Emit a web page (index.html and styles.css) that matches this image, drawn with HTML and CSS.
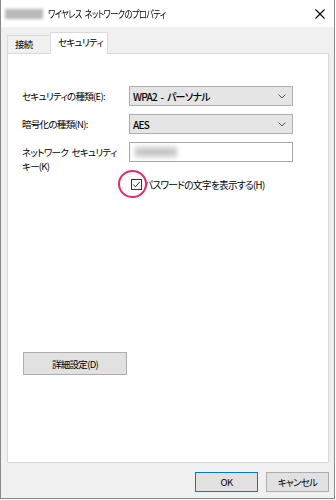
FILE: index.html
```html
<!DOCTYPE html>
<html lang="ja">
<head>
<meta charset="utf-8">
<link rel="stylesheet" href="styles.css">
</head>
<body>
<div class="window">
  <div class="titlebar">
    <div class="blur-box"><span class="blur-name"></span></div>
    <div class="title-box"><span class="title">ワイヤレス ネットワークのプロパティ</span></div>
    <svg class="close" width="10" height="10" viewBox="0 0 10 10"><path d="M0.5 0.5 L9.5 9.5 M9.5 0.5 L0.5 9.5" stroke="#000" stroke-width="1.1" fill="none"/></svg>
  </div>
  <div class="tabs">
    <div class="tab">接続</div>
    <div class="tab active">セキュリティ</div>
  </div>
  <div class="panel">
    <div class="row">
      <div class="label">セキュリティの種類(E):</div>
      <div class="select">WPA2 - パーソナル<svg class="chev" width="8" height="5" viewBox="0 0 8 5"><path d="M0.5 0.5 L4 4 L7.5 0.5" stroke="#555" stroke-width="1" fill="none"/></svg></div>
    </div>
    <div class="row">
      <div class="label">暗号化の種類(N):</div>
      <div class="select">AES<svg class="chev" width="8" height="5" viewBox="0 0 8 5"><path d="M0.5 0.5 L4 4 L7.5 0.5" stroke="#555" stroke-width="1" fill="none"/></svg></div>
    </div>
    <div class="row keyrow">
      <div class="label two">ネットワーク セキュリティ<br>キー(K)</div>
      <div class="input"><span class="blur-key"></span></div>
    </div>
    <div class="checkrow">
      <span class="checkbox"><svg width="11" height="11" viewBox="0 0 11 11"><path d="M1.5 5.5 L4.2 8.3 L9.5 2.2" stroke="#222" stroke-width="1.2" fill="none"/></svg></span>
      <span class="checklabel">パスワードの文字を表示する(H)</span>
      <span class="mark"></span>
    </div>
    <div class="btn detail">詳細設定(D)</div>
  </div>
  <div class="footer">
    <div class="btn ok">OK</div>
    <div class="btn">キャンセル</div>
  </div>
</div>
</body>
</html>
```
FILE: styles.css
```css
* { box-sizing: border-box; }
html, body { margin: 0; padding: 0; background: #ffffff; }
body {
  width: 336px;
  height: 500px;
  font-family: "Noto Sans CJK JP", "Noto Sans", sans-serif;
  font-size: 9.5px;
  font-feature-settings: "palt";
  letter-spacing: -0.7px;
  word-spacing: 2px;
  color: #000;
}
.window {
  width: 335px;
  height: 499px;
  background: #f0f0f0;
  border: 1px solid #8a8a8a;
  border-top: none;
  display: flex;
  flex-direction: column;
}
.titlebar {
  height: 27px;
  background: #ffffff;
  display: flex;
  align-items: center;
}
.blur-box {
  flex: 0 0 44px;
  height: 12px;
  padding: 1px 0 0 4px;
}
.blur-name {
  display: block;
  width: 38px;
  height: 10px;
  background: #b8b8b8;
  filter: blur(1.8px);
}
.title-box {
  flex: 0 0 130px;
  margin-left: 3px;
  white-space: nowrap;
  overflow: visible;
}
.title {
  display: inline-block;
  font-size: 10px;
  letter-spacing: -0.6px;
  transform: scaleX(0.81);
  transform-origin: 0 50%;
}
.close {
  flex-shrink: 0;
  margin-left: auto;
  margin-right: 9px;
}
.tabs {
  display: flex;
  align-items: flex-end;
  padding-left: 6px;
  padding-top: 5px;
  height: 26px;
}
.tab {
  height: 18px;
  width: 44px;
  border: 1px solid #d9d9d9;
  border-bottom: none;
  background: #f0f0f0;
  padding-left: 7px;
  line-height: 17px;
  white-space: nowrap;
}
.tab.active {
  height: 22px;
  width: 58px;
  margin-left: -1px;
  background: #ffffff;
  margin-bottom: -1px;
  position: relative;
  z-index: 1;
  line-height: 19px;
  padding-left: 7px;
}
.panel {
  margin-left: 6px;
  width: 322px;
  height: 410px;
  background: #ffffff;
  border: 1px solid #d9d9d9;
  padding: 32px 0 0 14px;
  display: flex;
  flex-direction: column;
  gap: 8px;
}
.row {
  display: flex;
  align-items: center;
  height: 20px;
}
.label {
  width: 107px;
  white-space: nowrap;
}
.label.two {
  line-height: 14px;
  align-self: flex-start;
  margin-top: 3px;
}
.keyrow {
  height: 28px;
  align-items: flex-start;
}
.select {
  width: 164px;
  height: 20px;
  background: #e5e5e5;
  border: 1px solid #adadad;
  padding-left: 3px;
  display: flex;
  align-items: center;
  font-weight: 500;
  font-size: 10px;
}
.chev { margin-left: auto; margin-right: 6px; }
.input {
  width: 164px;
  height: 20px;
  background: #fff;
  border: 1px solid #a6a6a6;
  display: flex;
  align-items: center;
}
.blur-key {
  width: 42px;
  height: 10px;
  margin-left: 5px;
  background: #c8c8c8;
  filter: blur(2.5px);
}
.checkrow {
  position: relative;
  display: flex;
  align-items: center;
  padding-left: 109px;
  height: 13px;
}
.checkbox {
  width: 11px;
  height: 11px;
  border: 1px solid #333;
  display: flex;
  align-items: center;
  justify-content: center;
}
.checklabel { margin-left: 2px; font-size: 9.7px; }
.mark {
  position: absolute;
  left: 96px;
  top: -8px;
  width: 29px;
  height: 28px;
  border: 2.5px solid #e2306c;
  border-radius: 50%;
}
.btn {
  height: 20px;
  background: #e1e1e1;
  border: 1px solid #adadad;
  display: flex;
  align-items: center;
  justify-content: center;
  white-space: nowrap;
}
.detail {
  width: 104px;
  height: 23px;
  margin-left: 1px;
  margin-top: 153px;
}
.footer {
  display: flex;
  justify-content: flex-end;
  gap: 8px;
  padding: 9px 5px 0 0;
}
.footer .btn { width: 63px; }
.ok { border-color: #0078d7; }
```
